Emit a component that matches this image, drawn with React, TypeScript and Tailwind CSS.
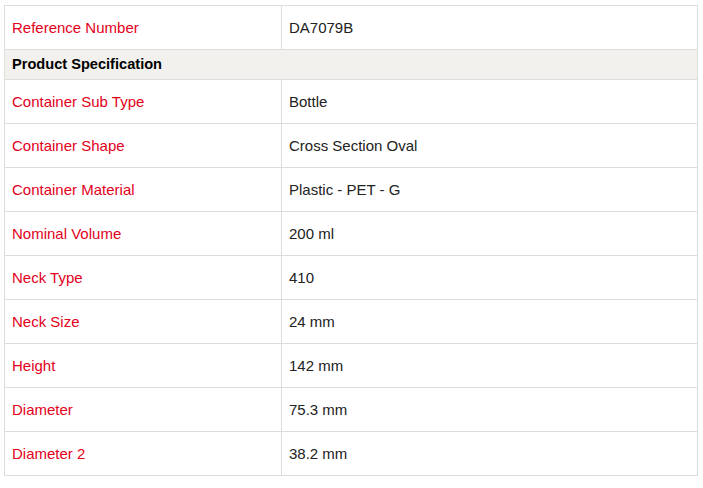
import React from 'react';

const specs: [string, string][] = [
  ['Container Sub Type', 'Bottle'],
  ['Container Shape', 'Cross Section Oval'],
  ['Container Material', 'Plastic - PET - G'],
  ['Nominal Volume', '200 ml'],
  ['Neck Type', '410'],
  ['Neck Size', '24 mm'],
  ['Height', '142 mm'],
  ['Diameter', '75.3 mm'],
  ['Diameter 2', '38.2 mm'],
];

function Row({ label, value }: { label: string; value: string }) {
  return (
    <tr className="h-[44px]">
      <td className="w-[277px] border border-[#dddddd] px-[7px] pt-[1px] align-middle text-[#e3001b]">{label}</td>
      <td className="border border-[#dddddd] px-[7px] pt-[1px] align-middle text-[#222222]">{value}</td>
    </tr>
  );
}

export default function App() {
  return (
    <div className="bg-white pl-[4px] pt-[5px] pr-[5px] font-['Liberation_Sans',Arial,sans-serif] text-[15px]">
      <table className="w-[694px] table-fixed border-collapse">
        <tbody>
          <Row label="Reference Number" value="DA7079B" />
          <tr className="h-[30px]">
            <td colSpan={2} className="border border-[#dddddd] bg-[#f2f1ee] px-[7px] pt-[1px] text-[14.6px] font-bold text-black">
              Product Specification
            </td>
          </tr>
          {specs.map(([label, value]) => (
            <Row key={label} label={label} value={value} />
          ))}
        </tbody>
      </table>
    </div>
  );
}
